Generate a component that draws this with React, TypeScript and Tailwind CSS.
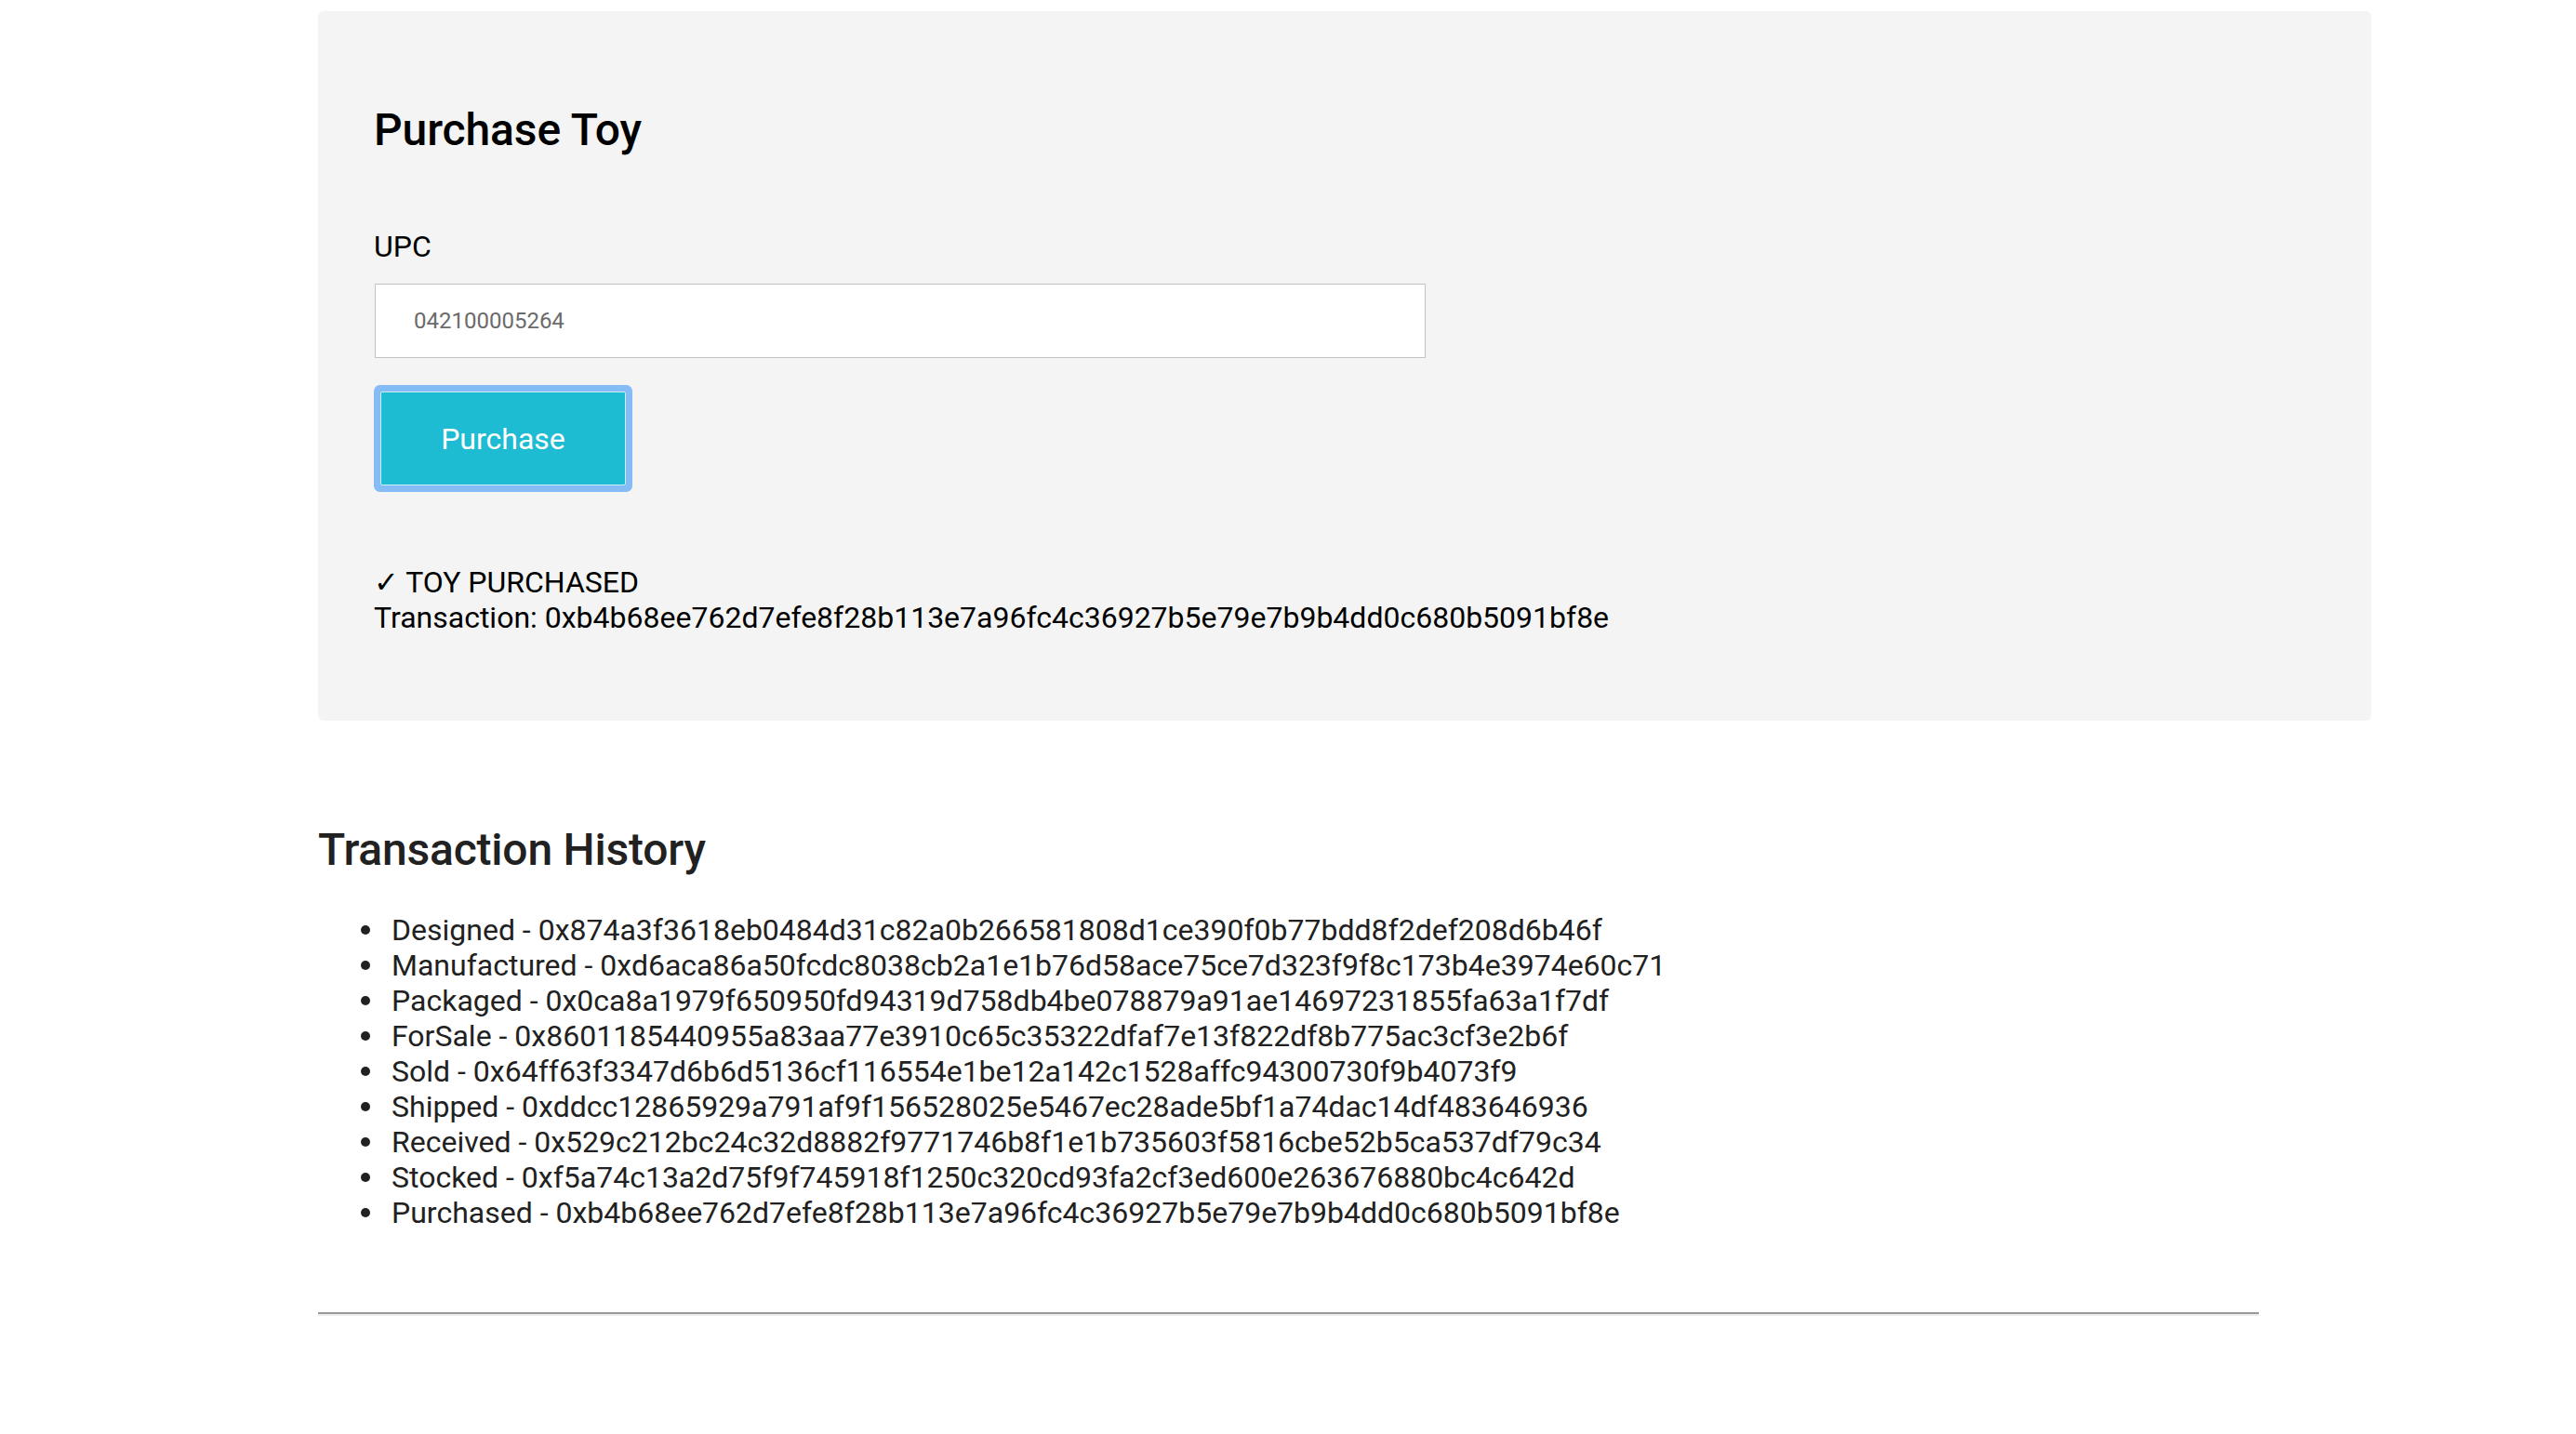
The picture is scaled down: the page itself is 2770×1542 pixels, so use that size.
const history = [
  ["Designed", "0x874a3f3618eb0484d31c82a0b266581808d1ce390f0b77bdd8f2def208d6b46f"],
  ["Manufactured", "0xd6aca86a50fcdc8038cb2a1e1b76d58ace75ce7d323f9f8c173b4e3974e60c71"],
  ["Packaged", "0x0ca8a1979f650950fd94319d758db4be078879a91ae14697231855fa63a1f7df"],
  ["ForSale", "0x8601185440955a83aa77e3910c65c35322dfaf7e13f822df8b775ac3cf3e2b6f"],
  ["Sold", "0x64ff63f3347d6b6d5136cf116554e1be12a142c1528affc94300730f9b4073f9"],
  ["Shipped", "0xddcc12865929a791af9f156528025e5467ec28ade5bf1a74dac14df483646936"],
  ["Received", "0x529c212bc24c32d8882f9771746b8f1e1b735603f5816cbe52b5ca537df79c34"],
  ["Stocked", "0xf5a74c13a2d75f9f745918f1250c320cd93fa2cf3ed600e263676880bc4c642d"],
  ["Purchased", "0xb4b68ee762d7efe8f28b113e7a96fc4c36927b5e79e7b9b4dd0c680b5091bf8e"],
];

const txHash = "0xb4b68ee762d7efe8f28b113e7a96fc4c36927b5e79e7b9b4dd0c680b5091bf8e";

/** Purchase form card with UPC input and result message. */
function PurchaseCard() {
  return (
    <div className="bg-[#f4f4f4] rounded-[6px] w-[2208px] pt-[100px] pb-[92px] pl-[60px] text-black">
      <h2 className="text-[48px] leading-[56px] font-medium tracking-[-0.1px]">Purchase Toy</h2>

      <label className="block mt-[78px] text-[32px] leading-[38px]">UPC</label>
      <input
        readOnly
        value="042100005264"
        className="block mt-[21px] ml-[1px] w-[1130px] h-[80px] bg-white border border-[#c2c2c2] pl-[41px] text-[24px] text-[#6b6b6b] outline-none"
        style={{ fontFamily: "Roboto, sans-serif" }}
      />

      <button className="block mt-[36px] ml-[7px] w-[264px] h-[101px] bg-[#1ebcd3] border border-[#cdeef4] text-white text-[32px] rounded-[2px] ring-[7px] ring-[#85bcf6]">
        Purchase
      </button>

      <div className="mt-[85px] text-[32px] leading-[38px]">
        <div>
          <span className="font-bold" style={{ fontFamily: "'DejaVu Sans', sans-serif" }}>✓</span> TOY PURCHASED
        </div>
        <div>Transaction: {txHash}</div>
      </div>
    </div>
  );
}

export default function App() {
  return (
    <div
      className="min-h-[1542px] bg-white pl-[342px] pt-[12px]"
      style={{ fontFamily: "Roboto, 'Noto Sans', sans-serif" }}
    >
      <PurchaseCard />

      {/* History */}
      <div className="text-[#212121]">
        <h2 className="mt-[111px] text-[48px] leading-[56px] font-medium tracking-[-0.2px]">Transaction History</h2>
        <ul className="mt-[39px] pl-[46px] text-[32px] leading-[38px]">
          {history.map(([step, hash]) => (
            <li key={step} className="flex items-center">
              <span className="w-[10px] h-[10px] rounded-full bg-[#212121] mr-[23px] shrink-0" />
              <span>
                {step} - {hash}
              </span>
            </li>
          ))}
        </ul>
      </div>

      <hr className="mt-[88px] w-[2087px] border-t-2 border-b-2 border-t-[#999999] border-b-[#ececec] border-x-0" />
    </div>
  );
}
